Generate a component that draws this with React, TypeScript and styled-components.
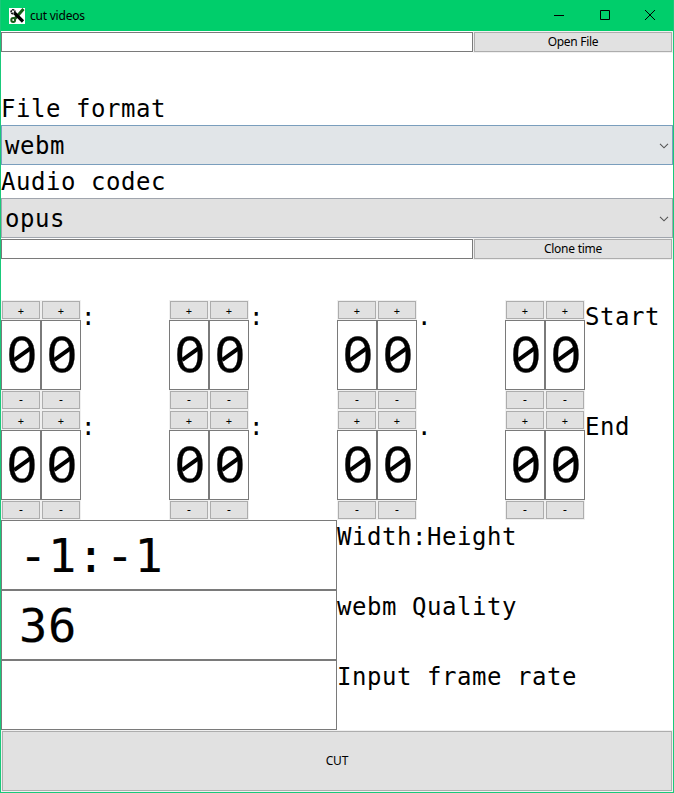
import React from 'react';
import styled, { createGlobalStyle } from 'styled-components';

const GlobalStyle = createGlobalStyle`
  * { box-sizing: border-box; }
  html, body { margin: 0; padding: 0; background: #fff; }
`;

const mono = `'DejaVu Sans Mono', 'Liberation Mono', monospace`;
const ui = `'Noto Sans', 'Open Sans', sans-serif`;

const Window = styled.div`
  width: 674px;
  height: 793px;
  display: flex;
  flex-direction: column;
  border: 1px solid #19c97a;
  border-top: 0;
  background: #fff;
  color: #000;
  overflow: hidden;
`;

const TitleBar = styled.header`
  flex: none;
  height: 31px;
  margin: 0 -1px;
  padding: 0 1px 0 9px;
  display: flex;
  align-items: center;
  background: #00ce6b;
`;

const Title = styled.span`
  flex: 1;
  margin-left: 5px;
  font: 12px/16px ${ui};
  letter-spacing: -0.22px;
  padding-top: 1px;
`;

const Control = styled.button`
  width: 45.5px;
  height: 30px;
  margin-bottom: 1px;
  border: 0;
  padding: 0;
  background: none;
  display: grid;
  place-items: center;
`;

const FileRow = styled.div`
  flex: none;
  height: 22px;
  display: grid;
  grid-template-columns: 472px 200px;
  align-items: center;
`;

const PathInput = styled.div`
  height: 20px;
  border: 1px solid #7a7a7a;
`;

const ButtonCell = styled.div`
  padding: 1px;
  background: #f0f0f0;
  display: grid;
`;

const PushButton = styled.button<{ $h: number; $tracking?: number; $drop?: number }>`
  height: ${(p) => p.$h}px;
  padding: ${(p) => p.$drop ?? 0}px 0 0;
  border: 1px solid #adadad;
  background: #e1e1e1;
  color: #000;
  font: ${(p) => (p.$drop ? 11 : 12)}px/14px ${ui};
  letter-spacing: ${(p) => p.$tracking ?? 0}px;
  text-align: center;
`;

const Label = styled.div<{ $h: number }>`
  height: ${(p) => p.$h}px;
  padding-top: 1px;
  font: 24px/32px ${mono};
  letter-spacing: 0.55px;
  white-space: pre;
`;

const FieldGroup = styled.div`
  flex: none;
  padding-top: 39px;
`;

const Combo = styled.div<{ $active?: boolean }>`
  height: 40px;
  padding: 2px 3px 0 3px;
  display: flex;
  align-items: center;
  justify-content: space-between;
  border: 1px solid ${(p) => (p.$active ? '#7a9ebd' : '#a0a5ad')};
  background: ${(p) => (p.$active ? '#e1e5e8' : '#e1e1e1')};
  font: 24px/32px ${mono};
  letter-spacing: 0.55px;
`;

const TimeRow = styled.div`
  flex: none;
  height: 110px;
  display: grid;
  grid-template-columns: repeat(4, 168px);
`;

const TimeCell = styled.div`
  display: grid;
  grid-template-columns: 40px 40px 88px;
`;

const Spinner = styled.div`
  display: flex;
  flex-direction: column;
`;

const Digit = styled.div`
  height: 70px;
  border: 1px solid #7a7a7a;
  text-align: center;
  font: 50px/65px ${ui};
`;

const SlashedZero = styled.span`
  position: relative;
  display: inline-block;
  transform: translateX(0.5px) scaleX(1.06);
  -webkit-text-stroke: 0.3px #000;
  &::after {
    content: '';
    position: absolute;
    left: 4.5px;
    top: 31px;
    width: 20px;
    height: 3.6px;
    background: #000;
    transform: rotate(-37deg);
  }
`;

const OptionRow = styled.div`
  flex: none;
  height: 70px;
  display: grid;
  grid-template-columns: 336px 1fr;
`;

const OptionInput = styled.div`
  height: 70px;
  padding: 2px 0 0 17px;
  border: 1px solid #7a7a7a;
  font: 47px/66px ${mono};
  letter-spacing: 0.6px;
  -webkit-text-stroke: 0.2px #000;
`;

const Chevron = () => (
  <svg width="10" height="6" viewBox="0 0 10 6" fill="none" stroke="#555" strokeWidth="1.1">
    <path d="M1 .8l4 4 4-4" />
  </svg>
);

const ScissorsIcon = () => (
  <svg width="16" height="16" viewBox="0 0 16 16">
    <rect width="16" height="16" fill="#fff" />
    <g fill="none">
      <path d="M6 10.5L11 5l3.5-4" stroke="#175c17" strokeWidth="3" />
      <circle cx="4.2" cy="12" r="1.9" stroke="#175c17" strokeWidth="2" />
      <path d="M5.5 5L9 8.5l5 5" stroke="#000" strokeWidth="3.2" />
      <circle cx="4" cy="3.7" r="1.9" stroke="#111" strokeWidth="1.6" strokeDasharray="2 .4" />
    </g>
  </svg>
);

const separators = [':', ':', '.', ''];

const TimeEntry = ({ name }: { name: string }) => (
  <TimeRow>
    {separators.map((s, i) => (
      <TimeCell key={i}>
        {[0, 1].map((n) => (
          <Spinner key={n}>
            <ButtonCell><PushButton $h={18} $drop={2}>+</PushButton></ButtonCell>
            <Digit><SlashedZero>0</SlashedZero></Digit>
            <ButtonCell><PushButton $h={18}>-</PushButton></ButtonCell>
          </Spinner>
        ))}
        <Label $h={32}>{s || name}</Label>
      </TimeCell>
    ))}
  </TimeRow>
);

const options = [
  ['-1:-1', 'Width:Height'],
  ['36', 'webm Quality'],
  ['', 'Input frame rate'],
];

const Body = styled.main`
  display: flex;
  flex-direction: column;
`;

const TimeBlock = styled.section`
  padding-top: 40px;
`;

export default function App() {
  return (
    <>
      <GlobalStyle />
      <Window>
        <TitleBar>
          <ScissorsIcon />
          <Title>cut videos</Title>
          <Control aria-label="Minimize">
            <svg width="10" height="10"><path d="M0 5.5h10" stroke="#000" /></svg>
          </Control>
          <Control aria-label="Maximize">
            <svg width="10" height="10"><path d="M.5.5h9v9h-9z" fill="none" stroke="#000" /></svg>
          </Control>
          <Control aria-label="Close">
            <svg width="10" height="10"><path d="M0 0l10 10M10 0L0 10" stroke="#000" /></svg>
          </Control>
        </TitleBar>
        <Body>
          <FileRow>
            <PathInput />
            <ButtonCell><PushButton $h={20} $tracking={-0.3}>Open File</PushButton></ButtonCell>
          </FileRow>
          <FieldGroup>
            <Label $h={33}>File format</Label>
            <Combo $active>webm<Chevron /></Combo>
            <Label $h={33}>Audio codec</Label>
            <Combo>opus<Chevron /></Combo>
          </FieldGroup>
          <FileRow>
            <PathInput />
            <ButtonCell><PushButton $h={20} $tracking={-0.25}>Clone time</PushButton></ButtonCell>
          </FileRow>
          <TimeBlock>
            <TimeEntry name="Start" />
            <TimeEntry name="End" />
          </TimeBlock>
          {options.map(([value, label]) => (
            <OptionRow key={label}>
              <OptionInput>{value}</OptionInput>
              <Label $h={32}>{label}</Label>
            </OptionRow>
          ))}
          <ButtonCell><PushButton $h={60} $tracking={-0.1}>CUT</PushButton></ButtonCell>
        </Body>
      </Window>
    </>
  );
}
